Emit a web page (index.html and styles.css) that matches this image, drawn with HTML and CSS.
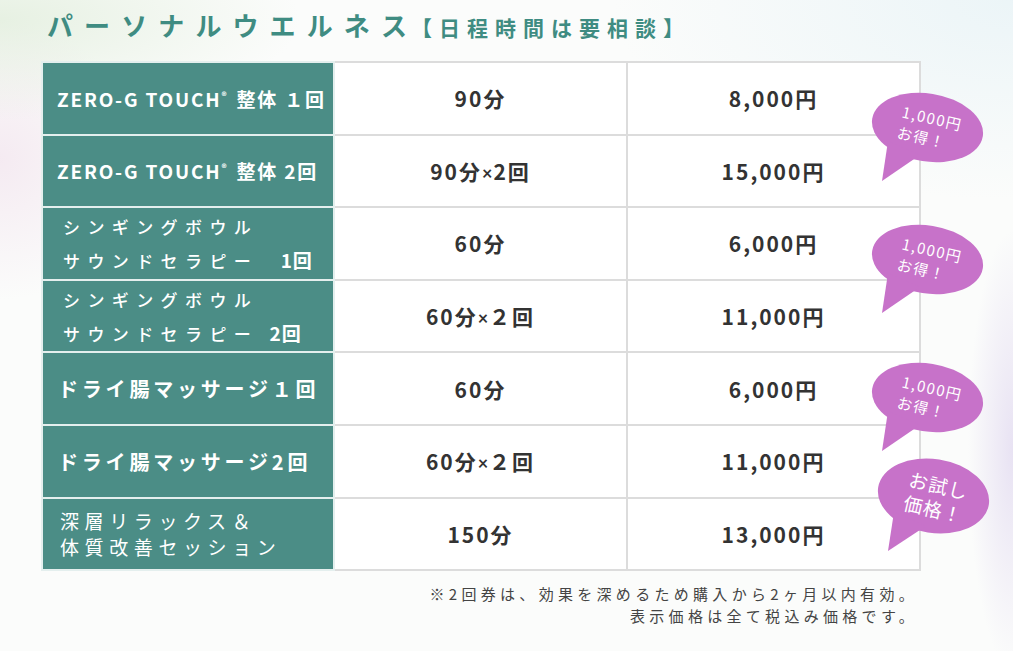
FILE: index.html
```html
<!DOCTYPE html>
<html lang="ja">
<head>
<meta charset="utf-8">
<title>パーソナルウエルネス</title>
<link rel="stylesheet" href="styles.css">
</head>
<body>
<div class="page">
  <h1 class="title"><span class="title-main">パーソナルウエルネス</span><span class="title-sub">【日程時間は要相談】</span></h1>
  <div class="table-wrap">
    <table class="price">
      <colgroup>
        <col class="c1">
        <col class="c2">
        <col class="c3">
      </colgroup>
      <tr>
        <th class="name latin">ZERO-G TOUCH<sup>®</sup> 整体 １回</th>
        <td>90分</td>
        <td>8,000円</td>
      </tr>
      <tr>
        <th class="name latin">ZERO-G TOUCH<sup>®</sup> 整体 2回</th>
        <td>90分<span class="x">×</span>2回</td>
        <td>15,000円</td>
      </tr>
      <tr>
        <th class="name spaced">シンギングボウル<br>サウンドセラピー&nbsp; <span class="num">1回</span></th>
        <td>60分</td>
        <td>6,000円</td>
      </tr>
      <tr>
        <th class="name spaced">シンギングボウル<br>サウンドセラピー <span class="num">2回</span></th>
        <td>60分<span class="x">×</span>２回</td>
        <td>11,000円</td>
      </tr>
      <tr>
        <th class="name dry">ドライ腸マッサージ１回</th>
        <td>60分</td>
        <td>6,000円</td>
      </tr>
      <tr>
        <th class="name dry">ドライ腸マッサージ2回</th>
        <td>60分<span class="x">×</span>２回</td>
        <td>11,000円</td>
      </tr>
      <tr>
        <th class="name deep">深層リラックス＆<br>体質改善セッション</th>
        <td>150分</td>
        <td>13,000円</td>
      </tr>
    </table>

    <div class="bubble b1">
      <svg class="bubble-shape" viewBox="0 0 122 98" width="122" height="98"><ellipse cx="59.5" cy="38.5" rx="56" ry="34" transform="rotate(9 59.5 38.5)"/><polygon points="20,52 14,92 52,66"/></svg>
      <div class="bubble-text"><span>1,000円<br>お得！</span></div>
    </div>
    <div class="bubble b2">
      <svg class="bubble-shape" viewBox="0 0 122 98" width="122" height="98"><ellipse cx="59.5" cy="38.5" rx="56" ry="34" transform="rotate(9 59.5 38.5)"/><polygon points="20,52 14,92 52,66"/></svg>
      <div class="bubble-text"><span>1,000円<br>お得！</span></div>
    </div>
    <div class="bubble b3">
      <svg class="bubble-shape" viewBox="0 0 122 98" width="122" height="98"><ellipse cx="59.5" cy="38.5" rx="56" ry="34" transform="rotate(9 59.5 38.5)"/><polygon points="20,52 14,92 52,66"/></svg>
      <div class="bubble-text"><span>1,000円<br>お得！</span></div>
    </div>
    <div class="bubble b4">
      <svg class="bubble-shape" viewBox="0 0 122 98" width="122" height="98"><ellipse cx="59.5" cy="40" rx="56" ry="37" transform="rotate(9 59.5 40)"/><polygon points="20,56 14,95 52,70"/></svg>
      <div class="bubble-text big"><span>お試し<br>価格！</span></div>
    </div>
  </div>
  <p class="note">※2回券は、効果を深めるため購入から2ヶ月以内有効。<br>表示価格は全て税込み価格です。</p>
</div>
</body>
</html>
```
FILE: styles.css
```css
html, body {
  margin: 0;
  padding: 0;
}
body {
  width: 1013px;
  height: 651px;
  overflow: hidden;
  font-family: "Noto Sans CJK JP", "Noto Sans", sans-serif;
  color: #333;
  background:
    radial-gradient(ellipse 300px 100px at 0 20px, rgba(222, 236, 216, 0.7), rgba(222, 236, 216, 0) 100%),
    radial-gradient(ellipse 140px 140px at 0 160px, rgba(243, 230, 239, 0.8), rgba(243, 230, 239, 0) 100%),
    radial-gradient(ellipse 45px 220px at 1013px 450px, rgba(232, 226, 243, 1), rgba(232, 226, 243, 0) 100%),
    radial-gradient(ellipse 400px 200px at 1013px 0, rgba(234, 244, 247, 0.9), rgba(234, 244, 247, 0) 100%),
    #fbfcfb;
}
.page {
  padding: 4px 0 0 0;
}
.title {
  margin: 0 0 21px 47px;
  height: 36px;
  line-height: 36px;
  font-weight: 700;
  color: #3f8c82;
  white-space: nowrap;
}
.title-main {
  font-size: 26px;
  letter-spacing: 11.1px;
}
.title-sub {
  font-size: 21px;
  letter-spacing: 7px;
  margin-left: -7px;
}
.table-wrap {
  position: relative;
  margin-left: 41px;
  width: 878px;
}
.price {
  border-collapse: collapse;
  width: 878px;
  table-layout: fixed;
  border: 2px solid #d8d8d8;
}
.c1 { width: 292px; }
.c2 { width: 293px; }
.c3 { width: 293px; }
.price th, .price td {
  height: 70.6px;
  padding: 0;
  border: 2px solid #dcdcdc;
}
.price td {
  background: #fff;
  text-align: center;
  font-size: 21px;
  font-weight: 700;
  letter-spacing: 2px;
  color: #333;
}
.x {
  font-family: "Lato", "Noto Sans", sans-serif;
  font-size: 18px;
  letter-spacing: 1px;
}
.name {
  background: #4b8d86;
  color: #fff;
  text-align: left;
  font-weight: 700;
  border-color: #e4efee !important;
  white-space: nowrap;
}
.latin {
  padding-left: 14px !important;
  font-size: 19px;
  letter-spacing: 1.8px;
}
.latin sup {
  font-size: 10px;
  vertical-align: 7px;
  margin-right: 2px;
}
.spaced {
  padding-left: 20px !important;
  font-size: 17px;
  font-weight: 500;
  letter-spacing: 7.4px;
  line-height: 33px;
}
.spaced .num {
  font-weight: 700;
  font-size: 19px;
  letter-spacing: 1px;
}
.dry {
  padding-left: 15px !important;
  font-size: 20px;
  letter-spacing: 3.8px;
}
.deep {
  padding-left: 17px !important;
  font-size: 19px;
  font-weight: 400;
  letter-spacing: 5.6px;
  line-height: 26px;
}
.bubble {
  position: absolute;
  width: 122px;
  height: 98px;
}
.bubble-shape {
  position: absolute;
  left: 0;
  top: 0;
  fill: #c772c9;
}
.bubble-text {
  position: absolute;
  left: 6px;
  top: 4px;
  width: 112px;
  height: 70px;
  display: flex;
  align-items: center;
  justify-content: center;
  transform: rotate(13deg);
  color: #fff;
  font-size: 15px;
  line-height: 21px;
  letter-spacing: 1.5px;
  font-weight: 400;
}
.bubble-text.big {
  font-size: 19px;
  line-height: 24px;
  letter-spacing: 1px;
  top: 6px;
}
.b1 { left: 827px; top: 28px; }
.b2 { left: 827px; top: 160px; }
.b3 { left: 827px; top: 298px; }
.b4 { left: 833px; top: 395px; }
.note {
  margin: 12px 0 0 0;
  width: 918px;
  text-align: right;
  font-size: 15px;
  line-height: 22px;
  letter-spacing: 4.3px;
  color: #444;
  font-weight: 400;
}
```
